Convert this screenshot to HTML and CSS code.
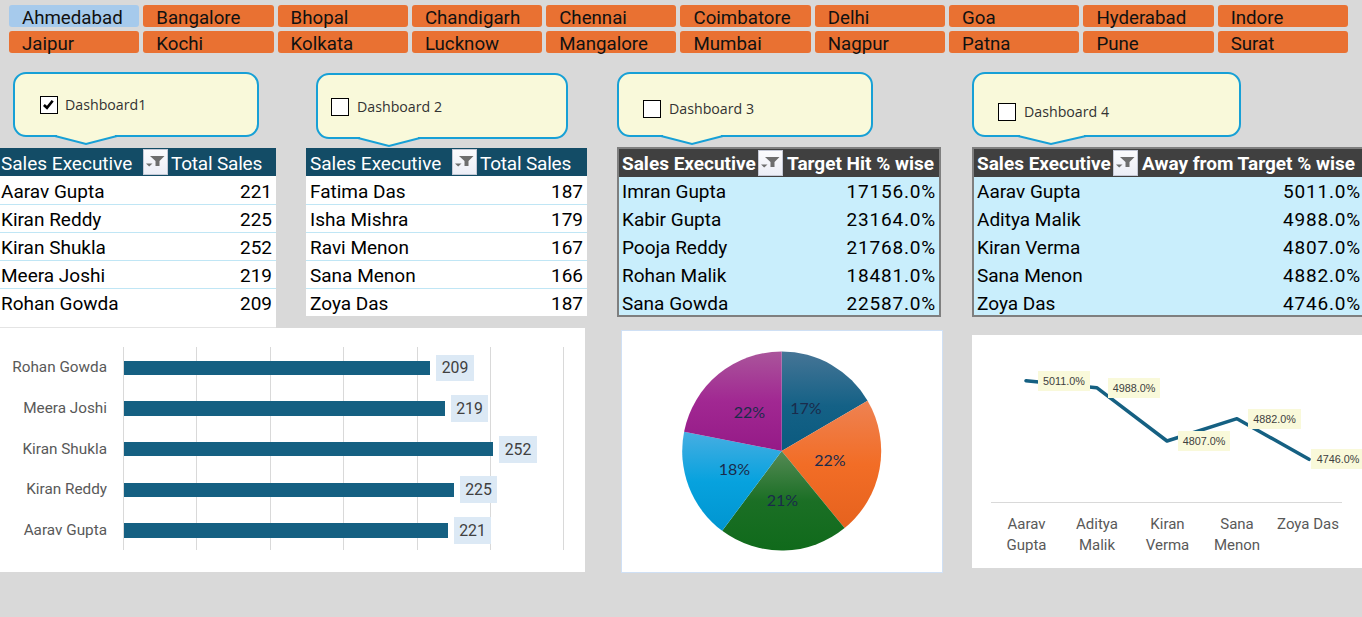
FILE: index.html
```html
<!DOCTYPE html>
<html lang="en">
<head>
<meta charset="utf-8">
<title>Sales Dashboard</title>
<link rel="stylesheet" href="styles.css">
</head>
<body>
<svg class="defs" width="0" height="0" aria-hidden="true">
  <defs>
    <g id="funnel">
      <path d="M7 7H21.500L16.500 12V17H12.500V12Z" fill="#6e6e6e"/>
      <path d="M3 14.500H9.500L6.200 17.500Z" fill="#6e6e6e"/>
    </g>
    <linearGradient id="gBlue" x1="0" y1="0" x2="0" y2="1"><stop offset="0" stop-color="#467596"/><stop offset=".55" stop-color="#146186"/><stop offset="1" stop-color="#0b5a7f"/></linearGradient>
    <linearGradient id="gOrange" x1="0" y1="0" x2="0" y2="1"><stop offset="0" stop-color="#ee8252"/><stop offset=".5" stop-color="#f26d26"/><stop offset="1" stop-color="#e6621e"/></linearGradient>
    <linearGradient id="gGreen" x1="0" y1="0" x2="0" y2="1"><stop offset="0" stop-color="#558a55"/><stop offset=".5" stop-color="#1b6f25"/><stop offset="1" stop-color="#106a1b"/></linearGradient>
    <linearGradient id="gSky" x1="0" y1="0" x2="0" y2="1"><stop offset="0" stop-color="#47aee2"/><stop offset=".5" stop-color="#07a2de"/><stop offset="1" stop-color="#0095d0"/></linearGradient>
    <linearGradient id="gPurple" x1="0" y1="0" x2="0" y2="1"><stop offset="0" stop-color="#aa559b"/><stop offset=".5" stop-color="#a12892"/><stop offset="1" stop-color="#951a87"/></linearGradient>
  </defs>
</svg>

<nav class="slicer">
  <button class="city city-on">Ahmedabad</button>
  <button class="city">Bangalore</button>
  <button class="city">Bhopal</button>
  <button class="city">Chandigarh</button>
  <button class="city">Chennai</button>
  <button class="city">Coimbatore</button>
  <button class="city">Delhi</button>
  <button class="city">Goa</button>
  <button class="city">Hyderabad</button>
  <button class="city">Indore</button>
  <button class="city">Jaipur</button>
  <button class="city">Kochi</button>
  <button class="city">Kolkata</button>
  <button class="city">Lucknow</button>
  <button class="city">Mangalore</button>
  <button class="city">Mumbai</button>
  <button class="city">Nagpur</button>
  <button class="city">Patna</button>
  <button class="city">Pune</button>
  <button class="city">Surat</button>
</nav>

<main class="dash">
  <section class="col col-1">
    <div class="callout callout-1">
      <span class="box"><svg viewBox="0 0 18 18" class="tick"><path d="M3.500 9.500L7.200 13L14 4.500"/></svg></span>
      <span class="lbl">Dashboard1</span>
      <svg class="tip" viewBox="0 0 62 12"><path d="M2 1H60V3L31 10L2 3Z" class="tip-fill"/><path d="M0 2L31 10L62 2" class="tip-line"/></svg>
    </div>
    <div class="tbl tbl-plain tbl-1">
      <div class="row head"><span class="name">Sales Executive</span><span class="fbtn"><svg viewBox="1 1 23 24"><use href="#funnel"/></svg></span><span class="metric">Total Sales</span></div>
      <div class="row"><span>Aarav Gupta</span><span>221</span></div>
      <div class="row"><span>Kiran Reddy</span><span>225</span></div>
      <div class="row"><span>Kiran Shukla</span><span>252</span></div>
      <div class="row"><span>Meera Joshi</span><span>219</span></div>
      <div class="row"><span>Rohan Gowda</span><span>209</span></div>
    </div>
  </section>

  <section class="col col-2">
    <div class="callout callout-2">
      <span class="box"></span>
      <span class="lbl">Dashboard 2</span>
      <svg class="tip" viewBox="0 0 62 12"><path d="M2 1H60V3L31 10L2 3Z" class="tip-fill"/><path d="M0 2L31 10L62 2" class="tip-line"/></svg>
    </div>
    <div class="tbl tbl-plain tbl-2">
      <div class="row head"><span class="name">Sales Executive</span><span class="fbtn"><svg viewBox="1 1 23 24"><use href="#funnel"/></svg></span><span class="metric">Total Sales</span></div>
      <div class="row"><span>Fatima Das</span><span>187</span></div>
      <div class="row"><span>Isha Mishra</span><span>179</span></div>
      <div class="row"><span>Ravi Menon</span><span>167</span></div>
      <div class="row"><span>Sana Menon</span><span>166</span></div>
      <div class="row"><span>Zoya Das</span><span>187</span></div>
    </div>
  </section>

  <section class="col col-3">
    <div class="callout callout-3">
      <span class="box"></span>
      <span class="lbl">Dashboard 3</span>
      <svg class="tip" viewBox="0 0 62 12"><path d="M2 1H60V3L31 10L2 3Z" class="tip-fill"/><path d="M0 2L31 10L62 2" class="tip-line"/></svg>
    </div>
    <div class="tbl tbl-dark tbl-3">
      <div class="row head"><span class="name">Sales Executive</span><span class="fbtn"><svg viewBox="1 1 23 24"><use href="#funnel"/></svg></span><span class="metric">Target Hit % wise</span></div>
      <div class="row"><span>Imran Gupta</span><span class="pct">17156.0%</span></div>
      <div class="row"><span>Kabir Gupta</span><span class="pct">23164.0%</span></div>
      <div class="row"><span>Pooja Reddy</span><span class="pct">21768.0%</span></div>
      <div class="row"><span>Rohan Malik</span><span class="pct">18481.0%</span></div>
      <div class="row"><span>Sana Gowda</span><span class="pct">22587.0%</span></div>
    </div>
  </section>

  <section class="col col-4">
    <div class="callout callout-4">
      <span class="box"></span>
      <span class="lbl">Dashboard 4</span>
      <svg class="tip" viewBox="0 0 68 12"><path d="M2 1H66V3L33 10L2 3Z" class="tip-fill"/><path d="M0 2L33 10L68 2" class="tip-line"/></svg>
    </div>
    <div class="tbl tbl-dark tbl-4">
      <div class="row head"><span class="name">Sales Executive</span><span class="fbtn"><svg viewBox="1 1 23 24"><use href="#funnel"/></svg></span><span class="metric">Away from Target % wise</span></div>
      <div class="row"><span>Aarav Gupta</span><span class="pct">5011.0%</span></div>
      <div class="row"><span>Aditya Malik</span><span class="pct">4988.0%</span></div>
      <div class="row"><span>Kiran Verma</span><span class="pct">4807.0%</span></div>
      <div class="row"><span>Sana Menon</span><span class="pct">4882.0%</span></div>
      <div class="row"><span>Zoya Das</span><span class="pct">4746.0%</span></div>
    </div>
  </section>

  <figure class="chart chart-bar">
    <svg viewBox="0 328 585 244" width="585" height="244">
      <g class="grid">
        <path d="M123.500 347V550M196.500 347V550M270.500 347V550M343.500 347V550M417.500 347V550M490.500 347V550M563.500 347V550"/>
      </g>
      <g class="bars">
        <rect x="124" y="361" width="306" height="14"/>
        <rect x="124" y="401" width="321" height="15"/>
        <rect x="124" y="442" width="369" height="14"/>
        <rect x="124" y="483" width="330" height="14"/>
        <rect x="124" y="523" width="324" height="15"/>
      </g>
      <g class="val-bg">
        <rect x="436" y="355" width="38" height="26"/>
        <rect x="451" y="395" width="37" height="27"/>
        <rect x="499" y="436" width="38" height="27"/>
        <rect x="460" y="476" width="37" height="27"/>
        <rect x="454" y="517" width="37" height="27"/>
      </g>
      <g class="val">
        <text x="455" y="373">209</text>
        <text x="469.500" y="414">219</text>
        <text x="518" y="455">252</text>
        <text x="478.500" y="495">225</text>
        <text x="472.500" y="536">221</text>
      </g>
      <g class="cat">
        <text x="107" y="372">Rohan Gowda</text>
        <text x="107" y="413">Meera Joshi</text>
        <text x="107" y="454">Kiran Shukla</text>
        <text x="107" y="494">Kiran Reddy</text>
        <text x="107" y="535">Aarav Gupta</text>
      </g>
    </svg>
  </figure>

  <figure class="chart chart-pie">
    <svg viewBox="622 331 320 241" width="320" height="241">
      <path fill="url(#gBlue)" d="M781.700 451L781.700 351.500A99.500 99.500 0 0 1 867.600 400.800Z"/>
      <path fill="url(#gOrange)" d="M781.700 451L867.600 400.800A99.500 99.500 0 0 1 844.600 528.100Z"/>
      <path fill="url(#gGreen)" d="M781.700 451L844.600 528.100A99.500 99.500 0 0 1 722.200 530.800Z"/>
      <path fill="url(#gSky)" d="M781.700 451L722.200 530.800A99.500 99.500 0 0 1 684.100 431.700Z"/>
      <path fill="url(#gPurple)" d="M781.700 451L684.100 431.700A99.500 99.500 0 0 1 781.700 351.500Z"/>
      <g class="pie-lbl">
        <text x="806" y="413.500">17%</text>
        <text x="830" y="466">22%</text>
        <text x="782.500" y="506">21%</text>
        <text x="734.500" y="475">18%</text>
        <text x="749.500" y="418">22%</text>
      </g>
    </svg>
  </figure>

  <figure class="chart chart-line">
    <svg viewBox="972 335 390 233" width="390" height="233">
      <path class="axis" d="M991 502.500H1342"/>
      <path class="trend" d="M1026 380.700L1096.700 387.700L1167 441L1237 418.700L1309 459.300"/>
      <g class="line-bg">
        <rect x="1038" y="371" width="52" height="20"/>
        <rect x="1108" y="378" width="52" height="20"/>
        <rect x="1178" y="431" width="52" height="20"/>
        <rect x="1248" y="409" width="53" height="20"/>
        <rect x="1311" y="449" width="51" height="20"/>
      </g>
      <g class="line-val">
        <text x="1064" y="385">5011.0%</text>
        <text x="1134" y="392">4988.0%</text>
        <text x="1204" y="445">4807.0%</text>
        <text x="1274.500" y="423">4882.0%</text>
        <text x="1338" y="463">4746.0%</text>
      </g>
      <g class="line-cat">
        <text x="1026.500" y="529">Aarav</text><text x="1026.500" y="550">Gupta</text>
        <text x="1097" y="529">Aditya</text><text x="1097" y="550">Malik</text>
        <text x="1167.500" y="529">Kiran</text><text x="1167.500" y="550">Verma</text>
        <text x="1237" y="529">Sana</text><text x="1237" y="550">Menon</text>
        <text x="1308" y="529">Zoya Das</text>
      </g>
    </svg>
  </figure>
</main>
</body>
</html>
```

FILE: styles.css
```css
* { box-sizing: border-box; }
html, body { margin: 0; padding: 0; }
body {
  width: 1362px;
  height: 617px;
  overflow: hidden;
  background: #d9d9d9;
  font-family: Roboto, "Liberation Sans", sans-serif;
  color: #000;
}
.defs { display: block; height: 0; }

/* slicer */
.slicer {
  display: grid;
  grid-template-columns: repeat(10, 130.300px);
  grid-auto-rows: 22px;
  column-gap: 4px;
  row-gap: 4px;
  padding: 5px 0 0 9px;
  height: 72px;
}
.city {
  border: 0;
  margin: 0;
  padding: 4px 0 0 13px;
  text-align: left;
  background: #e97132;
  border-radius: 3px;
  font: 400 18.700px/18px Roboto, sans-serif;
  color: #111;
}
.city-on { background: #a6caec; }

/* grid */
.dash {
  display: grid;
  grid-template-columns: 306px 311px 355px 390px;
  grid-template-rows: 256px auto;
}
.chart { margin: 0; background: #fff; }
.chart svg { display: block; }
.chart-bar { grid-column: 1 / 3; width: 585px; height: 244px; }
.chart-pie {
  margin: 3px 0 0 5px;
  width: 320px;
  height: 241px;
  outline: 1px solid #cfe0f5;
}
.chart-line { margin-top: 7px; width: 390px; height: 233px; }

/* callouts */
.callout {
  position: relative;
  z-index: 1;
  display: flex;
  align-items: center;
  height: 65px;
  background: #f9f9da;
  border: 2px solid #17a0d6;
  border-radius: 13px;
}
.callout-1 { width: 246px; margin: 0 0 11px 13px; padding: 0 0 0 25px; }
.callout-2 { width: 252px; margin: 1px 0 9px 10px; height: 66px; padding: 1px 0 0 13px; }
.callout-3 { width: 256px; margin: 0 0 11px 0; padding: 8px 0 0 24px; }
.callout-4 { width: 269px; margin: 0 0 11px 0; padding: 15px 0 0 24px; }
.box {
  flex: none;
  width: 18px;
  height: 18px;
  background: #fff;
  border: 1.500px solid #000;
  margin-right: 8px;
  display: block;
}
.callout-1 .box { margin-right: 7px; }
.tick { display: block; width: 15px; height: 15px; fill: none; stroke: #000; stroke-width: 3.200; }
.lbl { font: 14.200px/18px "Open Sans", sans-serif; color: #333; white-space: nowrap; }
.tip {
  position: absolute;
  top: 60px;
  width: 62px;
  height: 12px;
  overflow: visible;
}
.tip-fill { fill: #f9f9da; }
.tip-line { fill: none; stroke: #17a0d6; stroke-width: 2; }
.callout-1 .tip { left: 40px; }
.callout-2 .tip { left: 40px; top: 61px; }
.callout-3 .tip { left: 42px; }
.callout-4 .tip { left: 44px; width: 68px; }

/* tables */
.tbl { font-size: 19px; }
.row {
  display: flex;
  justify-content: space-between;
  align-items: center;
  height: 28px;
  white-space: nowrap;
}
.head { justify-content: flex-start; }
.fbtn {
  flex: none;
  width: 25px;
  height: 26px;
  background: linear-gradient(#fbfbfd, #eceef6);
  border: 1px solid #c5c9d6;
}
.fbtn svg { display: block; width: 23px; height: 24px; }

.tbl-plain { background: #fff; }
.tbl-plain .row { padding-top: 3px; }
.tbl-plain .fbtn { margin-top: -3px; }
.tbl-plain .head { background: #134c66; color: #fff; }
.tbl-plain .row + .row + .row { box-shadow: inset 0 1px #c0e6f5; }
.tbl-1 { width: 276px; padding-bottom: 11px; border-bottom: 1px solid #e4e4e4; }
.tbl-1 .row { padding-left: 1px; padding-right: 4px; }
.tbl-1 .name { width: 142px; }
.tbl-1 .metric { margin-left: 3px; letter-spacing: -.2px; }
.tbl-2 { width: 281px; }
.tbl-2 .row { padding-left: 4px; padding-right: 4px; }
.tbl-2 .name { width: 142px; }
.tbl-2 .metric { margin-left: 3px; letter-spacing: -.2px; }

.tbl-dark { background: #c9eefc; border: 2px solid #7f7f7f; margin-top: -1px; }
.tbl-dark .head { background: #404040; color: #fff; font-weight: 700; }
.tbl-dark .row { padding: 1px 3px 0 3px; }
.tbl-dark .fbtn { margin-top: -1px; }
.tbl-dark .pct { letter-spacing: .8px; }
.tbl-3 { width: 324px; height: 170px; }
.tbl-4 { width: 390px; height: 170px; border-right: 0; }
.tbl-4 .row { padding-right: 1px; }
.tbl-dark .name { width: 136px; }
.tbl-dark .metric { margin-left: 4px; }

/* bar chart */
.grid path { stroke: #d9d9d9; stroke-width: 1; fill: none; }
.bars rect { fill: #156082; }
.val-bg rect { fill: #dce9f5; }
.val text { font: 15.800px Roboto, sans-serif; fill: #404040; text-anchor: middle; }
.cat text { font: 15.300px Roboto, sans-serif; fill: #595959; text-anchor: end; }

/* pie */
.pie-lbl text { font: 16px Lato, sans-serif; fill: #1a2b4b; text-anchor: middle; }

/* line */
.axis { stroke: #d9d9d9; stroke-width: 1; fill: none; }
.trend { stroke: #156082; stroke-width: 3.500; fill: none; stroke-linecap: round; stroke-linejoin: round; }
.line-bg rect { fill: #f9f9da; }
.line-val text { font: 10.800px "Liberation Sans", sans-serif; fill: #404040; text-anchor: middle; }
.line-cat text { font: 15px Roboto, sans-serif; fill: #595959; text-anchor: middle; }
```
